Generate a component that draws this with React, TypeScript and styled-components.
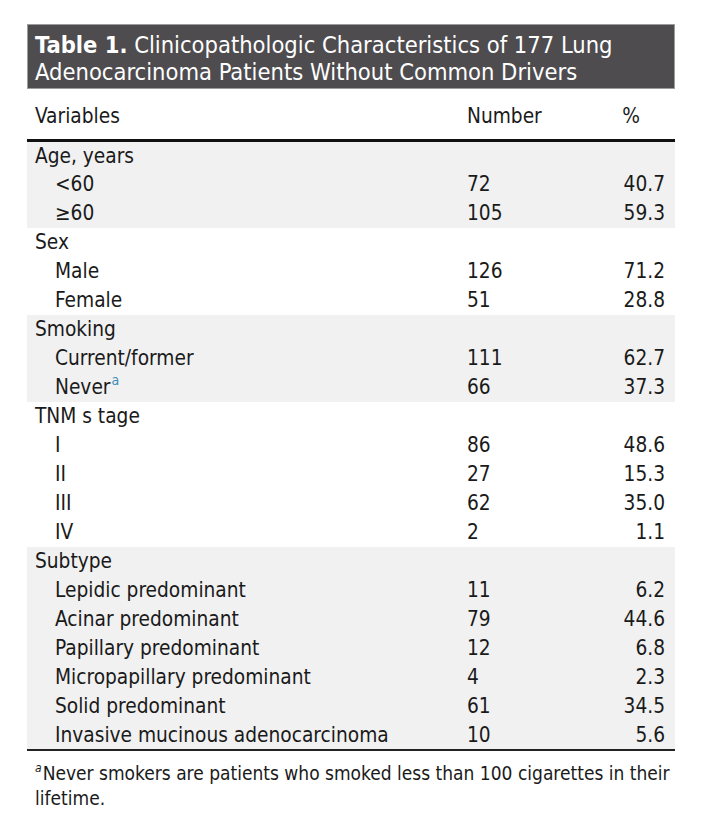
import React from "react";
import styled, { createGlobalStyle } from "styled-components";

const GlobalStyle = createGlobalStyle`
  html, body {
    margin: 0;
    padding: 0;
    background: #ffffff;
  }
  body {
    font-family: "DejaVu Sans Condensed", "DejaVu Sans", sans-serif;
    font-stretch: condensed;
    color: #1a1a1a;
  }
`;

const Page = styled.div`
  padding: 24px 39px 0 27px;
  width: 648px;
`;

const TitleBar = styled.div`
  background: #4e4c4f;
  border: 1px solid #9c9c9c;
  color: #ffffff;
  height: 59px;
  box-sizing: content-box;
  padding: 4px 7px 0 7px;
  font-size: 23.5px;
  line-height: 27px;
  display: flex;
  flex-direction: column;
  justify-content: center;
  white-space: nowrap;
`;

const TitleLabel = styled.b`
  font-weight: bold;
`;

const Table = styled.table`
  width: 648px;
  border-collapse: collapse;
  font-size: 20.7px;
  table-layout: fixed;
`;

const HeadCell = styled.th<{ $align?: "left" | "center" | "right" }>`
  text-align: ${({ $align }) => $align || "left"};
  font-weight: normal;
  height: 46px;
  padding: 4px 0 0 ${({ $align }) => ($align ? "0" : "8px")};
  border-bottom: 3px solid #111111;
  vertical-align: middle;
`;

const Group = styled.tbody<{ $shaded: boolean }>`
  background: ${({ $shaded }) => ($shaded ? "#f1f1f1" : "#ffffff")};
`;

const Row = styled.tr`
  height: 29px;
`;

const LabelCell = styled.td<{ $indent?: boolean }>`
  padding: 0 0 0 ${({ $indent }) => ($indent ? "28px" : "8px")};
  white-space: nowrap;
  vertical-align: middle;
`;

const NumberCell = styled.td`
  padding: 0;
  vertical-align: middle;
`;

const PercentCell = styled.td`
  padding: 0 10px 0 0;
  text-align: right;
  vertical-align: middle;
`;

const Closing = styled.tbody`
  tr td {
    border-top: 2px solid #222222;
    height: 0;
    padding: 0;
  }
`;

const NoteRef = styled.sup`
  color: #3b8db8;
  font-size: 14px;
  vertical-align: 9px;
  line-height: 0;
  margin-left: 1px;
`;

const Footnote = styled.p`
  margin: 10px 0 0 0;
  padding: 0 8px;
  font-size: 19px;
  line-height: 25px;
  white-space: nowrap;
`;

const FootMark = styled.span`
  display: inline-block;
  font-style: italic;
  font-size: 12px;
  line-height: 12px;
  vertical-align: 8px;
  margin-right: 1px;
`;

type Item = { label: React.ReactNode; n: string; pct: string };
type GroupData = { title: string; items: Item[] };

const groups: GroupData[] = [
  {
    title: "Age, years",
    items: [
      { label: "<60", n: "72", pct: "40.7" },
      { label: "≥60", n: "105", pct: "59.3" },
    ],
  },
  {
    title: "Sex",
    items: [
      { label: "Male", n: "126", pct: "71.2" },
      { label: "Female", n: "51", pct: "28.8" },
    ],
  },
  {
    title: "Smoking",
    items: [
      { label: "Current/former", n: "111", pct: "62.7" },
      {
        label: (
          <>
            Never<NoteRef>a</NoteRef>
          </>
        ),
        n: "66",
        pct: "37.3",
      },
    ],
  },
  {
    title: "TNM s tage",
    items: [
      { label: "I", n: "86", pct: "48.6" },
      { label: "II", n: "27", pct: "15.3" },
      { label: "III", n: "62", pct: "35.0" },
      { label: "IV", n: "2", pct: "1.1" },
    ],
  },
  {
    title: "Subtype",
    items: [
      { label: "Lepidic predominant", n: "11", pct: "6.2" },
      { label: "Acinar predominant", n: "79", pct: "44.6" },
      { label: "Papillary predominant", n: "12", pct: "6.8" },
      { label: "Micropapillary predominant", n: "4", pct: "2.3" },
      { label: "Solid predominant", n: "61", pct: "34.5" },
      { label: "Invasive mucinous adenocarcinoma", n: "10", pct: "5.6" },
    ],
  },
];

export default function App() {
  return (
    <>
      <GlobalStyle />
      <Page>
        <TitleBar>
          <div>
            <TitleLabel>Table 1.</TitleLabel> Clinicopathologic Characteristics of 177 Lung
          </div>
          <div>Adenocarcinoma Patients Without Common Drivers</div>
        </TitleBar>
        <Table>
          <colgroup>
            <col style={{ width: 440 }} />
            <col style={{ width: 120 }} />
            <col style={{ width: 88 }} />
          </colgroup>
          <thead>
            <tr>
              <HeadCell>Variables</HeadCell>
              <HeadCell $align="left">Number</HeadCell>
              <HeadCell $align="center">%</HeadCell>
            </tr>
          </thead>
          {groups.map((g, gi) => (
            <Group key={g.title} $shaded={gi % 2 === 0}>
              <Row>
                <LabelCell colSpan={3}>{g.title}</LabelCell>
              </Row>
              {g.items.map((it, i) => (
                <Row key={i}>
                  <LabelCell $indent>{it.label}</LabelCell>
                  <NumberCell>{it.n}</NumberCell>
                  <PercentCell>{it.pct}</PercentCell>
                </Row>
              ))}
            </Group>
          ))}
          <Closing>
            <tr>
              <td colSpan={3} />
            </tr>
          </Closing>
        </Table>
        <Footnote>
          <FootMark>a</FootMark>Never smokers are patients who smoked less than 100 cigarettes in their
          <br />
          lifetime.
        </Footnote>
      </Page>
    </>
  );
}
